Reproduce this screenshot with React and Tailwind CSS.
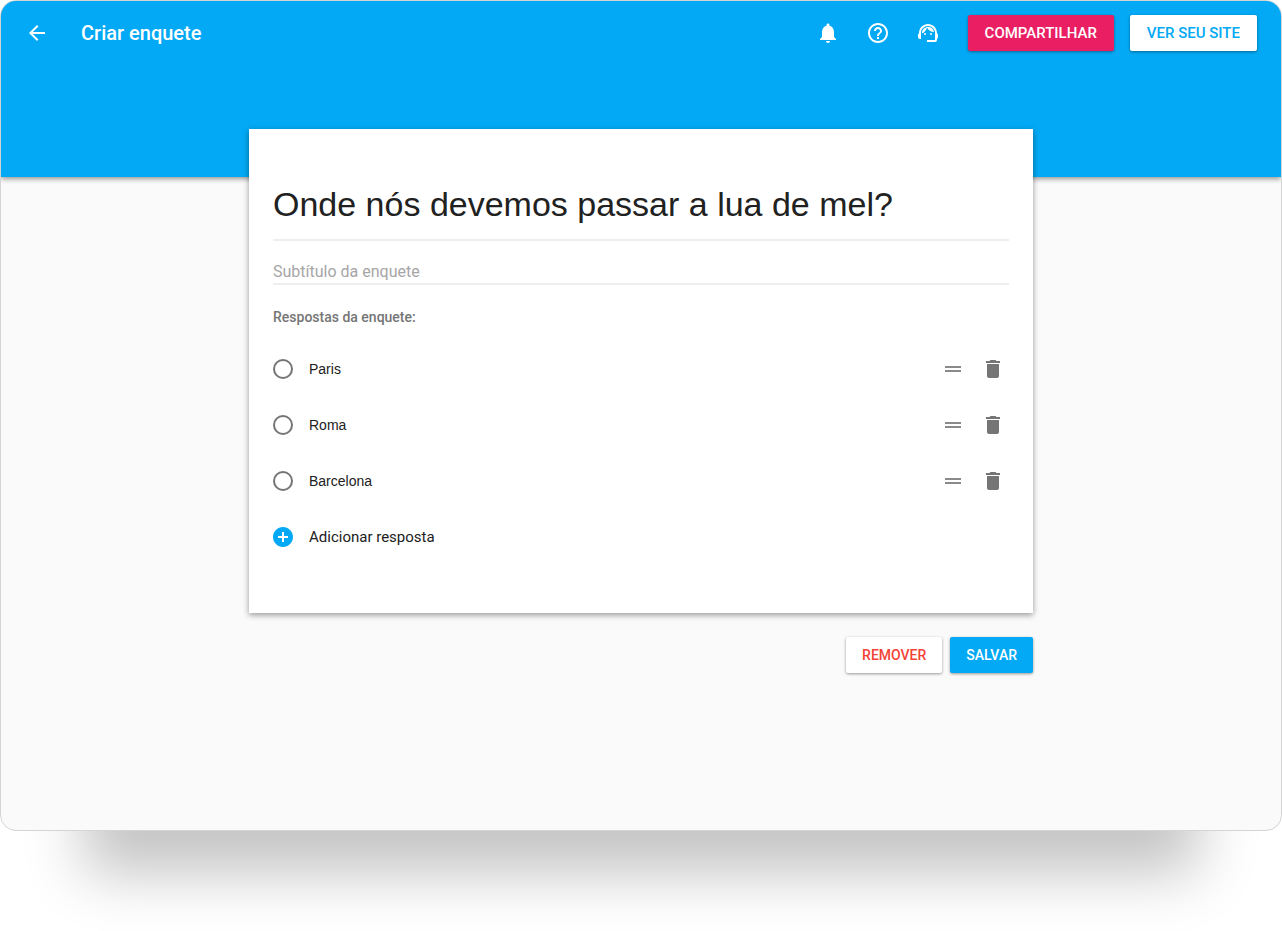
import React, { useState } from 'react';
import {
  MdAddCircle,
  MdArrowBack,
  MdDelete,
  MdDragHandle,
  MdHelpOutline,
  MdNotifications,
  MdSupportAgent,
} from 'react-icons/md';

const INITIAL_ANSWERS = [
  { id: 1, text: 'Paris' },
  { id: 2, text: 'Roma' },
  { id: 3, text: 'Barcelona' },
];

const IconButton = ({ label, className = '', children, ...props }) => (
  <button
    type="button"
    aria-label={label}
    className={`flex shrink-0 cursor-pointer items-center justify-center rounded-full ${className}`}
    {...props}
  >
    {children}
  </button>
);

const RaisedButton = ({ className = '', children, ...props }) => (
  <button
    type="button"
    className={`h-9 shrink-0 cursor-pointer rounded-xs font-medium uppercase shadow-[0_1px_3px_rgba(0,0,0,0.4)] ${className}`}
    {...props}
  >
    {children}
  </button>
);

const Toolbar = () => (
  <div className="flex h-16 items-center pr-6 pl-3">
    <IconButton label="Voltar" className="size-12">
      <MdArrowBack className="size-6" />
    </IconButton>
    <h1 className="ml-5 text-xl font-medium">Criar enquete</h1>

    <div className="ml-auto flex items-center gap-4">
      <div className="flex gap-0.5">
        <IconButton label="Notificações" className="size-12">
          <MdNotifications className="size-6" />
        </IconButton>
        <IconButton label="Ajuda" className="size-12">
          <MdHelpOutline className="size-6" />
        </IconButton>
        <IconButton label="Suporte" className="size-12">
          <MdSupportAgent className="size-6" />
        </IconButton>
      </div>
      <RaisedButton className="bg-[#e91e63] px-[17px] text-[15px] text-white">Compartilhar</RaisedButton>
      <RaisedButton className="bg-white px-[17px] text-[15px] text-[#03a9f4]">Ver seu site</RaisedButton>
    </div>
  </div>
);

const AnswerRow = ({ answer, onChange, onRemove }) => (
  <li className="flex h-14 items-center gap-4">
    <input
      type="radio"
      name="resposta"
      aria-label={`Escolher ${answer.text}`}
      className="size-5 shrink-0 appearance-none rounded-full border-2 border-[#757575] checked:border-[6px] checked:border-[#03a9f4]"
    />
    <input
      type="text"
      aria-label="Resposta"
      value={answer.text}
      onChange={(e) => onChange(answer.id, e.target.value)}
      className="h-8 min-w-0 flex-1 font-['Liberation_Sans',Arial,sans-serif] text-sm text-[#212121] outline-none"
    />
    <div className="flex gap-2">
      <IconButton label="Reordenar resposta" className="size-8 text-[#8a8a8a]">
        <MdDragHandle className="size-6" />
      </IconButton>
      <IconButton label="Excluir resposta" className="size-8 text-[#757575]" onClick={() => onRemove(answer.id)}>
        <MdDelete className="size-6" />
      </IconButton>
    </div>
  </li>
);

const App = () => {
  const [title, setTitle] = useState('Onde nós devemos passar a lua de mel?');
  const [subtitle, setSubtitle] = useState('');
  const [answers, setAnswers] = useState(INITIAL_ANSWERS);

  const changeAnswer = (id, text) => {
    setAnswers((prev) => prev.map((a) => (a.id === id ? { ...a, text } : a)));
  };

  const removeAnswer = (id) => {
    setAnswers((prev) => prev.filter((a) => a.id !== id));
  };

  const addAnswer = () => {
    setAnswers((prev) => [...prev, { id: Date.now(), text: '' }]);
  };

  return (
    <div className="overflow-hidden bg-white pb-25 font-[Roboto,sans-serif]">
      <div className="rounded-2xl shadow-[0_126px_56px_-84px_rgba(0,0,0,0.235)]">
        <div className="overflow-hidden rounded-2xl border border-[#d4d4d4] bg-[#fafafa] pb-[157px]">
          <header className="bg-[#03a9f4] pb-28 text-white shadow-[0_2px_5px_rgba(0,0,0,0.4)]">
            <Toolbar />
          </header>

          <main className="relative mx-auto -mt-12 max-w-[784px]">
            <section className="bg-white px-6 pt-10 pb-12 shadow-[0_2px_6px_rgba(0,0,0,0.4)]">
              <input
                type="text"
                aria-label="Título da enquete"
                value={title}
                onChange={(e) => setTitle(e.target.value)}
                className="h-18 w-full border-b-2 border-[#eeeeee] font-['Liberation_Sans',Arial,sans-serif] text-[34px] text-[#212121] outline-none"
              />
              <input
                type="text"
                aria-label="Subtítulo da enquete"
                placeholder="Subtítulo da enquete"
                value={subtitle}
                onChange={(e) => setSubtitle(e.target.value)}
                className="mt-5 block h-6 w-full border-b-2 border-[#eeeeee] text-base text-[#212121] outline-none placeholder:text-[#a6a6a6]"
              />

              <h2 className="mt-5 text-sm/6 font-medium text-[#757575]">Respostas da enquete:</h2>
              <ul className="mt-3">
                {answers.map((answer) => (
                  <AnswerRow key={answer.id} answer={answer} onChange={changeAnswer} onRemove={removeAnswer} />
                ))}
              </ul>
              <button
                type="button"
                onClick={addAnswer}
                className="-ml-0.5 flex h-14 cursor-pointer items-center gap-3.5 text-[15px] text-[#212121]"
              >
                <MdAddCircle className="size-6 text-[#03a9f4]" />
                Adicionar resposta
              </button>
            </section>

            <div className="mt-6 flex justify-end gap-2">
              <RaisedButton className="bg-white px-4 text-sm text-[#f44336]">Remover</RaisedButton>
              <RaisedButton className="bg-[#03a9f4] px-4 text-sm text-white">Salvar</RaisedButton>
            </div>
          </main>
        </div>
      </div>
    </div>
  );
};

export default App;
